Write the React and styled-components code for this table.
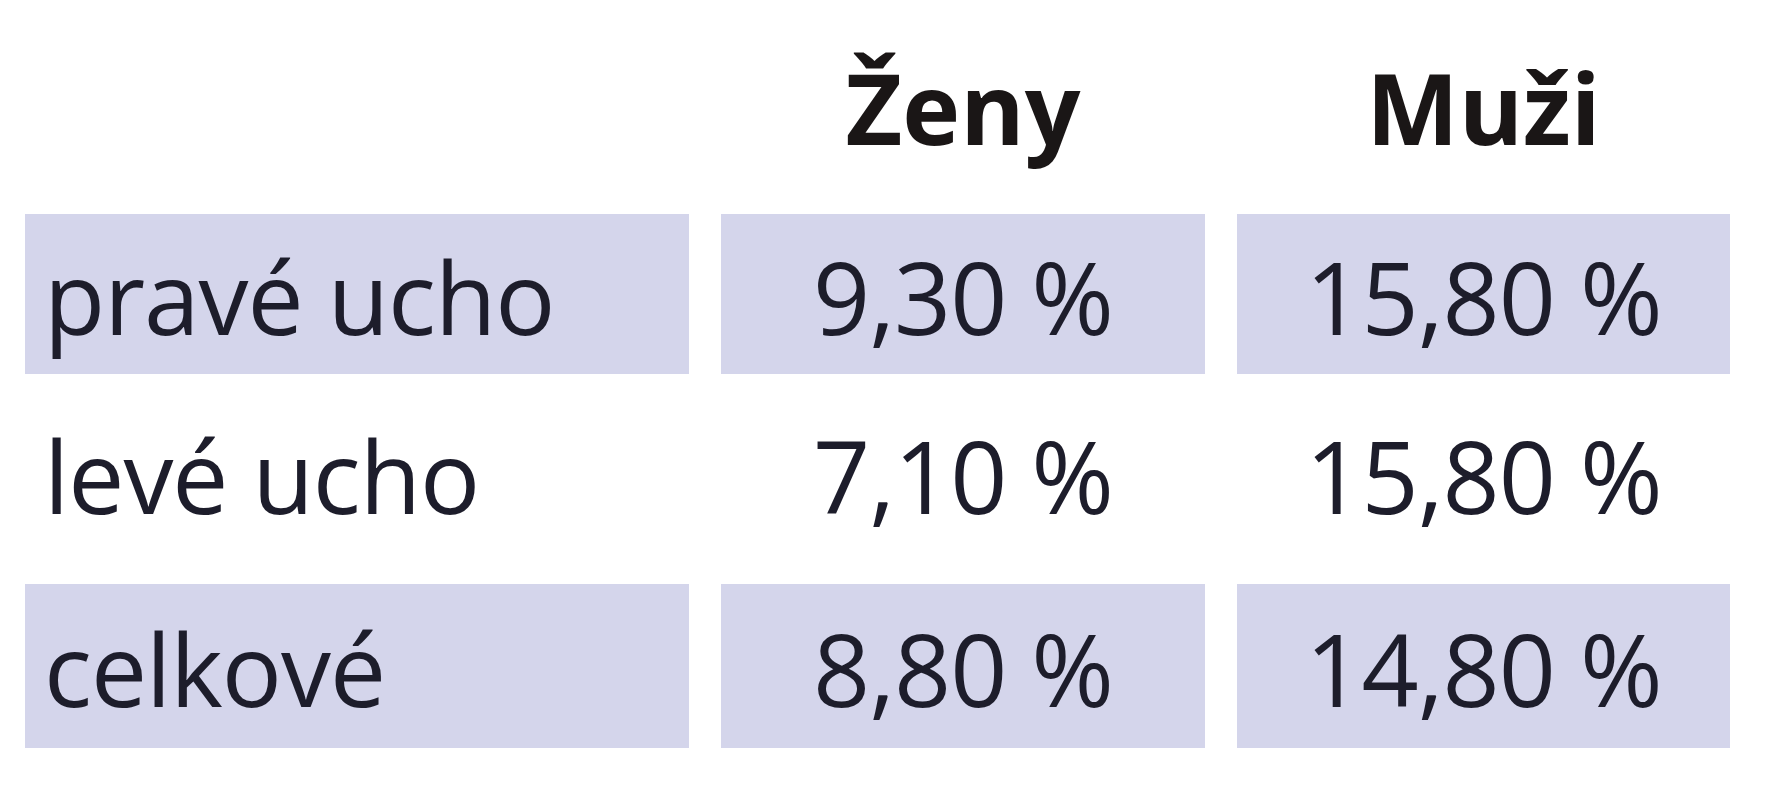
import React from 'react';
import styled, { createGlobalStyle } from 'styled-components';

const GlobalStyle = createGlobalStyle`
  html, body {
    margin: 0;
    padding: 0;
    background: #ffffff;
  }
  body {
    font-family: "Open Sans", "Liberation Sans", sans-serif;
    color: #1d1d2b;
  }
`;

const Table = styled.div`
  display: grid;
  grid-template-columns: 664px 484px 493px;
  grid-template-rows: 190px 160px 162px 164px;
  column-gap: 32px;
  row-gap: 24px;
  padding-left: 25px;
  width: 1766px;
  height: 800px;
  box-sizing: border-box;
`;

const HeadCell = styled.div`
  display: flex;
  align-items: flex-start;
  justify-content: center;
  padding-top: 58px;
  font-size: 98px;
  font-weight: 700;
  line-height: 1;
  color: #1a1616;
`;

const Cell = styled.div`
  display: flex;
  align-items: center;
  justify-content: ${(p) => (p.label ? 'flex-start' : 'center')};
  padding-left: ${(p) => (p.label ? '19px' : '0')};
  padding-top: ${(p) => (p.shaded ? '4px' : '0')};
  padding-bottom: ${(p) => (p.shaded ? '0' : '8px')};
  background: ${(p) => (p.shaded ? '#d4d5eb' : 'transparent')};
  font-size: 100px;
  line-height: 1;
  letter-spacing: -1px;
`;

const rows = [
  { label: 'pravé ucho', women: '9,30 %', men: '15,80 %' },
  { label: 'levé ucho', women: '7,10 %', men: '15,80 %' },
  { label: 'celkové', women: '8,80 %', men: '14,80 %' },
];

function App() {
  return (
    <>
      <GlobalStyle />
      <Table>
        <div />
        <HeadCell>Ženy</HeadCell>
        <HeadCell>Muži</HeadCell>
        {rows.map((row, i) => {
          const shaded = i % 2 === 0;
          return (
            <React.Fragment key={row.label}>
              <Cell label shaded={shaded}>{row.label}</Cell>
              <Cell shaded={shaded}>{row.women}</Cell>
              <Cell shaded={shaded}>{row.men}</Cell>
            </React.Fragment>
          );
        })}
      </Table>
    </>
  );
}

export default App;
